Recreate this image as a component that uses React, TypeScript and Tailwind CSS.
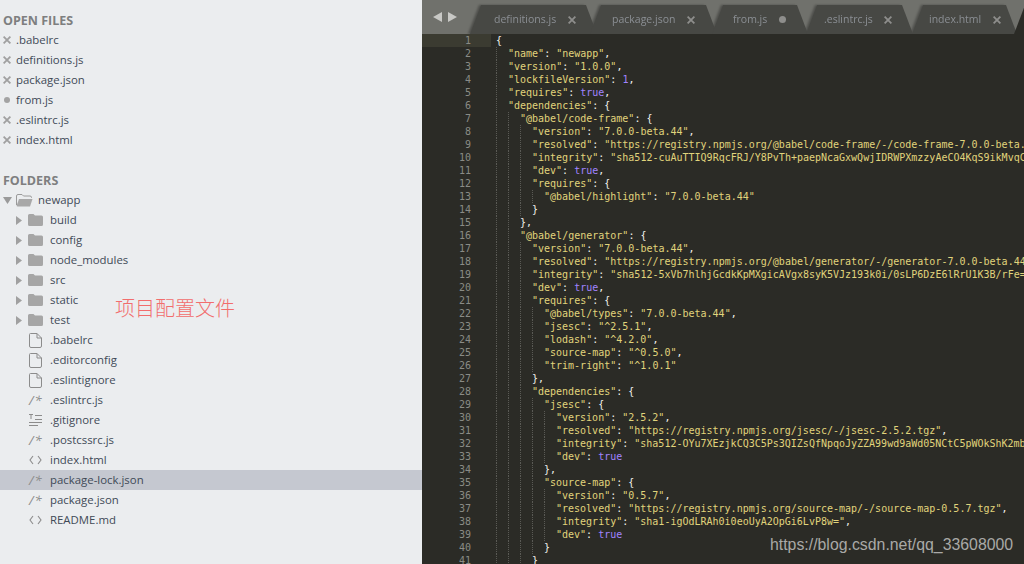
import { ReactNode } from 'react'

const openFiles = ['.babelrc', 'definitions.js', 'package.json', 'from.js', '.eslintrc.js', 'index.html']
const folders = ['build', 'config', 'node_modules', 'src', 'static', 'test']

type Kind = 'file' | 'js' | 'list' | 'tag'
const files: { name: string; kind: Kind; active?: boolean }[] = [
    { name: '.babelrc', kind: 'file' },
    { name: '.editorconfig', kind: 'file' },
    { name: '.eslintignore', kind: 'file' },
    { name: '.eslintrc.js', kind: 'js' },
    { name: '.gitignore', kind: 'list' },
    { name: '.postcssrc.js', kind: 'js' },
    { name: 'index.html', kind: 'tag' },
    { name: 'package-lock.json', kind: 'js', active: true },
    { name: 'package.json', kind: 'js' },
    { name: 'README.md', kind: 'tag' },
]

const tabs = [
    { name: 'definitions.js', cls: 'w-[127px] pl-6', dirty: false },
    { name: 'package.json', cls: 'w-[127px] pl-[22px] -ml-[7px]', dirty: false },
    { name: 'from.js', cls: 'w-[96px] pl-[21px] -ml-[5px]', dirty: true },
    { name: '.eslintrc.js', cls: 'w-[107px] pl-[18px] -ml-[2px]', dirty: false },
    { name: 'index.html', cls: 'w-[105px] pl-[17px] -ml-[1px]', dirty: false },
]

const code = [
    '{',
    '  "name": "newapp",',
    '  "version": "1.0.0",',
    '  "lockfileVersion": 1,',
    '  "requires": true,',
    '  "dependencies": {',
    '    "@babel/code-frame": {',
    '      "version": "7.0.0-beta.44",',
    '      "resolved": "https://registry.npmjs.org/@babel/code-frame/-/code-frame-7.0.0-beta.44.tgz",',
    '      "integrity": "sha512-cuAuTTIQ9RqcFRJ/Y8PvTh+paepNcaGxwQwjIDRWPXmzzyAeCO4KqS9ikMvqCw==",',
    '      "dev": true,',
    '      "requires": {',
    '        "@babel/highlight": "7.0.0-beta.44"',
    '      }',
    '    },',
    '    "@babel/generator": {',
    '      "version": "7.0.0-beta.44",',
    '      "resolved": "https://registry.npmjs.org/@babel/generator/-/generator-7.0.0-beta.44.tgz",',
    '      "integrity": "sha512-5xVb7hlhjGcdkKpMXgicAVgx8syK5VJz193k0i/0sLP6DzE6lRrU1K3B/rFe==",',
    '      "dev": true,',
    '      "requires": {',
    '        "@babel/types": "7.0.0-beta.44",',
    '        "jsesc": "^2.5.1",',
    '        "lodash": "^4.2.0",',
    '        "source-map": "^0.5.0",',
    '        "trim-right": "^1.0.1"',
    '      },',
    '      "dependencies": {',
    '        "jsesc": {',
    '          "version": "2.5.2",',
    '          "resolved": "https://registry.npmjs.org/jsesc/-/jsesc-2.5.2.tgz",',
    '          "integrity": "sha512-OYu7XEzjkCQ3C5Ps3QIZsQfNpqoJyZZA99wd9aWd05NCtC5pWOkShK2mbA==",',
    '          "dev": true',
    '        },',
    '        "source-map": {',
    '          "version": "0.5.7",',
    '          "resolved": "https://registry.npmjs.org/source-map/-/source-map-0.5.7.tgz",',
    '          "integrity": "sha1-igOdLRAh0i0eoUyA2OpGi6LvP8w=",',
    '          "dev": true',
    '        }',
    '      }',
]

function Row({ children, active }: { children: ReactNode; active?: boolean }) {
    return (
        <div className={`flex h-5 items-center whitespace-pre ${active ? 'bg-[#c5c8d0]' : ''}`}>{children}</div>
    )
}

function Heading({ children }: { children: ReactNode }) {
    return <div className="flex h-5 items-center pt-[2px] pl-[3px] text-[12.5px] font-bold text-[#7e7f80]">{children}</div>
}

function FileIcon({ kind }: { kind: Kind }) {
    if (kind === 'js') {
        return <span className="w-[14px] text-[13px] leading-none tracking-[1px] text-[#8c8c8c] italic">/*</span>
    }
    if (kind === 'tag') {
        return (
            <svg width="13" height="10" viewBox="0 0 13 10" fill="none" stroke="#8c8c8c" strokeWidth="1.1">
                <path d="M4 1 L1 5 L4 9 M9 1 L12 5 L9 9" />
            </svg>
        )
    }
    if (kind === 'list') {
        return (
            <svg width="14" height="12" viewBox="0 0 14 12" fill="none" stroke="#8c8c8c" strokeWidth="1">
                <path d="M0 .5 H4 M2 .5 V5 M6 1.5 H13 M6 5.5 H13 M0 8.5 H13 M0 11.5 H9" />
            </svg>
        )
    }
    return (
        <svg width="13" height="15" viewBox="0 0 13 15" fill="none" stroke="#8c8c8c" strokeWidth="1">
            <path d="M1.5 .5 H8 L12.5 5 V13 a1.5 1.5 0 0 1 -1.5 1.5 H2 A1.5 1.5 0 0 1 .5 13 V1.5 a1 1 0 0 1 1 -1 Z M8 .5 V5 H12.5" />
        </svg>
    )
}

function Sidebar() {
    return (
        <aside className="h-full w-[422px] shrink-0 bg-[#ebedef] pt-[10px] font-['Open_Sans',sans-serif] text-[11.4px] text-[#3f4a57]">
            <Heading>OPEN FILES</Heading>
            {openFiles.map((name) => (
                <Row key={name}>
                    <span className="flex w-4 justify-center pr-[2px] text-[#9a9a9a]">
                        {name === 'from.js' ? (
                            <span className="h-[6px] w-[6px] rounded-full bg-[#a3a3a3]" />
                        ) : (
                            <svg width="8" height="8" viewBox="0 0 8 8" stroke="#a0a0a0" strokeWidth="1.8">
                                <path d="M.6 .6 L7.4 7.4 M7.4 .6 L.6 7.4" />
                            </svg>
                        )}
                    </span>
                    {name}
                </Row>
            ))}
            <div className="h-5" />
            <Heading>FOLDERS</Heading>
            <Row>
                <svg className="ml-[3px]" width="10" height="7" viewBox="0 0 10 7" fill="#9a9a9a">
                    <path d="M0 0 H9 L4.5 7 Z" />
                </svg>
                <svg className="ml-[3px]" width="17" height="13" viewBox="0 0 17 13" fill="none" stroke="#9a9a9a">
                    <path d="M.5 11 V2 a1.5 1.5 0 0 1 1.5 -1.5 H6 L7.5 2 H14 a1.5 1.5 0 0 1 1.5 1.5 V4" />
                    <path d="M.5 12 L3 5 H16.5 L14 12.5 H1.5 Z" fill="#a8a8a8" stroke="none" />
                </svg>
                <span className="ml-[5px]">newapp</span>
            </Row>
            {folders.map((name) => (
                <Row key={name}>
                    <svg className="ml-4" width="6" height="9" viewBox="0 0 6 9" fill="#a0a0a0">
                        <path d="M0 0 L6 4.5 L0 9 Z" />
                    </svg>
                    <svg className="ml-[6px]" width="15" height="12" viewBox="0 0 15 12" fill="#a6a6a6">
                        <path d="M1.5 0 H5.5 L7 1.5 H13.5 A1.5 1.5 0 0 1 15 3 V10.5 A1.5 1.5 0 0 1 13.5 12 H1.5 A1.5 1.5 0 0 1 0 10.5 V1.5 A1.5 1.5 0 0 1 1.5 0 Z" />
                    </svg>
                    <span className="ml-[7px]">{name}</span>
                </Row>
            ))}
            {files.map((f) => (
                <Row key={f.name} active={f.active}>
                    <span className="ml-[29px] flex w-[21px] items-center">
                        <FileIcon kind={f.kind} />
                    </span>
                    {f.name}
                </Row>
            ))}
        </aside>
    )
}

function TabBar() {
    return (
        <div className="flex h-[34px] shrink-0 items-end overflow-hidden bg-[#70716c]">
            <div className="flex h-full w-[48px] shrink-0 items-center gap-[6px] pl-[11px]">
                <svg width="9" height="10" viewBox="0 0 9 10" fill="#c8c8c5">
                    <path d="M9 0 V10 L0 5 Z" />
                </svg>
                <svg width="9" height="10" viewBox="0 0 9 10" fill="#c8c8c5">
                    <path d="M0 0 V10 L9 5 Z" />
                </svg>
            </div>
            <div className="flex items-end [filter:drop-shadow(-2px_0_1px_rgba(0,0,0,0.3))]">
                {tabs.map((t) => (
                    <div
                        key={t.name}
                        className={`flex h-[29px] shrink-0 items-center bg-[#474844] text-[10.5px] text-[#8b8f94] [clip-path:polygon(0_100%,11px_0,calc(100%_-_11px)_0,100%_100%)] ${t.cls}`}
                    >
                        <span>{t.name}</span>
                        <span className="ml-[11px] flex h-3 w-[9px] items-center justify-center">
                            {t.dirty ? (
                                <span className="h-[7px] w-[7px] rounded-full bg-[#8e8e8c]" />
                            ) : (
                                <svg width="8" height="8" viewBox="0 0 8 8" stroke="#8e8e8c" strokeWidth="1.8">
                                    <path d="M.6 .6 L7.4 7.4 M7.4 .6 L.6 7.4" />
                                </svg>
                            )}
                        </span>
                    </div>
                ))}
            </div>
            {/* start of the tab that runs off the window */}
            <div className="-ml-[3px] h-[29px] w-[30px] shrink-0 bg-[#2b2b26] [clip-path:polygon(0_100%,11px_0,100%_0,100%_100%)]" />
        </div>
    )
}

// strings yellow, literals purple, punctuation left white
function highlight(line: string) {
    return line.split(/("[^"]*"|\btrue\b|\b1(?=,))/).map((part, i) => {
        if (part.startsWith('"')) return <span key={i} className="text-[#e0d47c]">{part}</span>
        if (part === 'true' || part === '1') return <span key={i} className="text-[#a184ff]">{part}</span>
        return <span key={i}>{part}</span>
    })
}

function CodeLine({ line, n }: { line: string; n: number }) {
    const depth = Math.floor((line.length - line.trimStart().length) / 2)
    return (
        <div className="flex h-[13px] leading-[13px]">
            <div className={`w-[69px] shrink-0 pr-[20px] text-right text-[#8a8b85] ${n === 1 ? 'bg-[#3b3b31]' : ''}`}>{n}</div>
            <div className="ml-[5px] whitespace-pre">
                {Array.from({ length: depth }, (_, i) => (
                    <span
                        key={i}
                        className="inline-block h-[13px] w-3 border-l border-dotted border-[#5a5a55] align-top"
                    />
                ))}
                {highlight(line.trimStart())}
            </div>
        </div>
    )
}

export default function App() {
    return (
        <div className="relative flex h-[564px] w-[1024px] overflow-hidden">
            <Sidebar />
            <main className="flex min-w-0 flex-1 flex-col bg-[#2b2b26] font-['Open_Sans',sans-serif]">
                <TabBar />
                <div className="overflow-hidden font-['DejaVu_Sans_Mono',monospace] text-[10px] text-[#f1f1ec]">
                    {code.map((line, i) => (
                        <CodeLine key={i} line={line} n={i + 1} />
                    ))}
                </div>
            </main>
            {/* annotation and watermark laid over the screenshot */}
            <span className="absolute left-[115px] top-[295px] font-['Noto_Sans_CJK_SC',sans-serif] text-[20px] leading-[26px] font-light text-[#f26d6d]">
                项目配置文件
            </span>
            <span className="absolute left-[770px] top-[534px] font-['Liberation_Sans',sans-serif] text-[15.85px] leading-[22px] text-[#a9a9a7]">
                https://blog.csdn.net/qq_33608000
            </span>
        </div>
    )
}
